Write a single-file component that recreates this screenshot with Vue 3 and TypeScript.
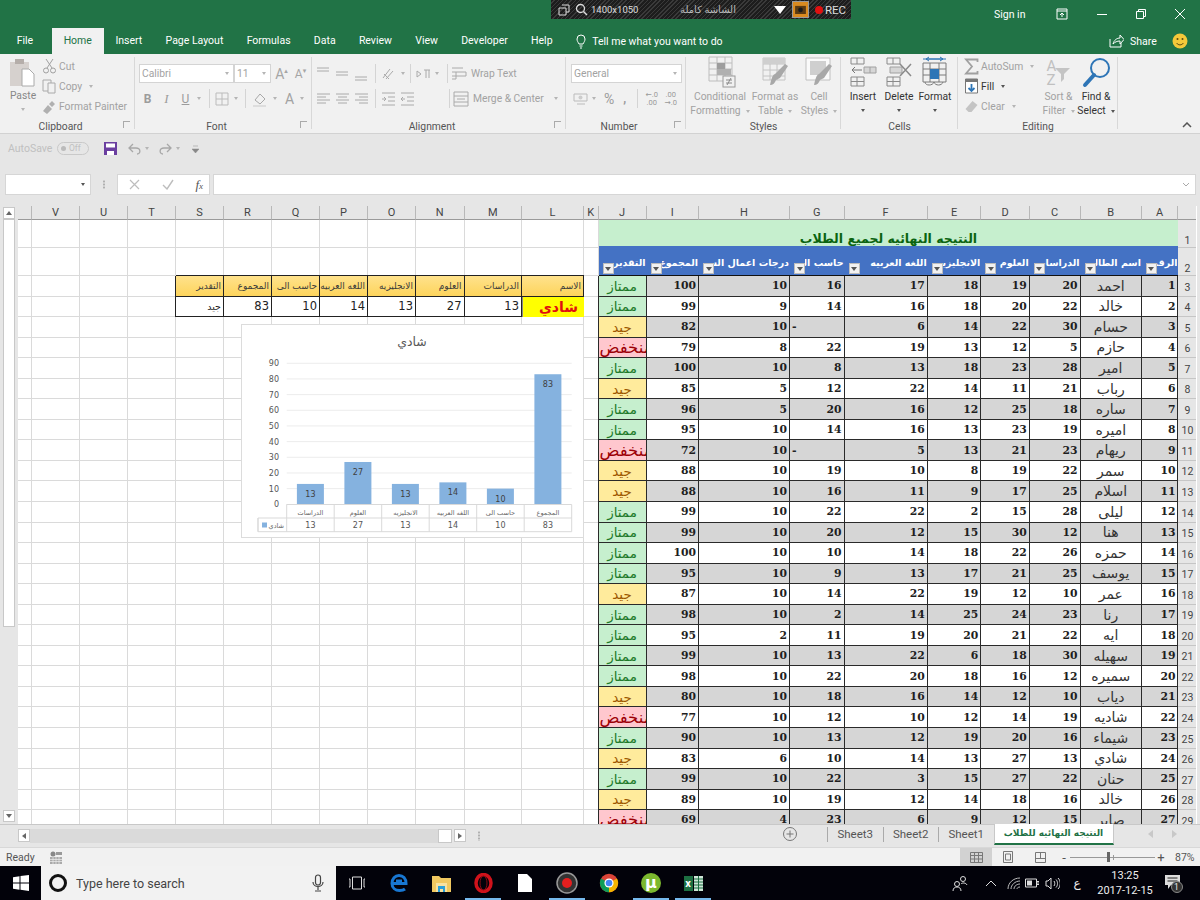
<script setup lang="ts">
type Cell = { text: string; cls: string }

const tabs = ['File', 'Home', 'Insert', 'Page Layout', 'Formulas', 'Data', 'Review', 'View', 'Developer', 'Help']
const leftCols = ['', 'V', 'U', 'T', 'S', 'R', 'Q', 'P', 'O', 'N', 'M', 'L', 'K']
const rightCols = ['J', 'I', 'H', 'G', 'F', 'E', 'D', 'C', 'B', 'A']
const columns = [...leftCols, ...rightCols]

const tableHead: Record<string, [string, string]> = {
  S: ['التقدير', 'جيد'],
  R: ['المجموع', '83'],
  Q: ['حاسب الى', '10'],
  P: ['اللغه العربيه', '14'],
  O: ['الانجليزيه', '13'],
  N: ['العلوم', '27'],
  M: ['الدراسات', '13'],
  L: ['الاسم', 'شادي'],
}

const headers = ['التقدير', 'المجموع', 'درجات اعمال السنه', 'حاسب الى', 'اللغه العربيه', 'الانجليزيه', 'العلوم', 'الدراسات', 'اسم الطالب', 'الرقم']

const students: string[][] = [
  ['احمد', '20', '19', '18', '17', '16', '10', '100', 'ممتاز'],
  ['خالد', '22', '20', '18', '16', '14', '9', '99', 'ممتاز'],
  ['حسام', '30', '22', '14', '6', '-', '10', '82', 'جيد'],
  ['حازم', '5', '12', '13', '19', '22', '8', '79', 'منخفض'],
  ['امير', '28', '23', '18', '13', '8', '10', '100', 'ممتاز'],
  ['رباب', '21', '11', '14', '22', '12', '5', '85', 'جيد'],
  ['ساره', '18', '25', '12', '16', '20', '5', '96', 'ممتاز'],
  ['اميره', '19', '23', '13', '16', '14', '10', '95', 'ممتاز'],
  ['ريهام', '23', '21', '13', '5', '-', '10', '72', 'منخفض'],
  ['سمر', '22', '19', '8', '10', '19', '10', '88', 'جيد'],
  ['اسلام', '25', '17', '9', '11', '16', '10', '88', 'جيد'],
  ['ليلى', '28', '15', '2', '22', '22', '10', '99', 'ممتاز'],
  ['هنا', '12', '30', '15', '12', '20', '10', '99', 'ممتاز'],
  ['حمزه', '26', '22', '18', '14', '10', '10', '100', 'ممتاز'],
  ['يوسف', '25', '21', '17', '13', '9', '10', '95', 'ممتاز'],
  ['عمر', '10', '12', '19', '22', '14', '10', '87', 'جيد'],
  ['رنا', '23', '24', '25', '14', '2', '10', '98', 'ممتاز'],
  ['ايه', '22', '21', '20', '19', '11', '2', '95', 'ممتاز'],
  ['سهيله', '30', '18', '6', '22', '13', '10', '99', 'ممتاز'],
  ['سميره', '12', '16', '18', '20', '22', '10', '98', 'ممتاز'],
  ['دياب', '10', '12', '14', '16', '18', '10', '80', 'جيد'],
  ['شاديه', '19', '14', '12', '10', '12', '10', '77', 'منخفض'],
  ['شيماء', '16', '20', '19', '12', '13', '10', '90', 'ممتاز'],
  ['شادي', '13', '27', '13', '14', '10', '6', '83', 'جيد'],
  ['حنان', '22', '27', '15', '3', '22', '10', '99', 'ممتاز'],
  ['خالد', '16', '18', '14', '12', '19', '10', '89', 'جيد'],
  ['صابر', '15', '12', '9', '6', '23', '4', '69', 'منخفض'],
]

const gradeClass: Record<string, string> = { 'ممتاز': 'g-good', 'جيد': 'g-mid', 'منخفض': 'g-low' }

const rowNumbers = Array.from({ length: 29 }, (_, i) => i + 1)

const rowCells = (r: number): Cell[] => {
  const out: Cell[] = leftCols.map((c) => {
    const t = tableHead[c]
    if (t && r === 3) return { text: t[0], cls: c === 'S' ? 'lt-head lt-first' : 'lt-head' }
    if (t && r === 4) {
      if (c === 'L') return { text: t[1], cls: 'lt-name' }
      return { text: t[1], cls: c === 'S' ? 'lt-val lt-first lt-small' : 'lt-val' }
    }
    return { text: '', cls: '' }
  })
  if (r === 1) {
    out.push({ text: 'النتيجه النهائيه لجميع الطلاب', cls: 'title-cell' })
  } else if (r === 2) {
    headers.forEach((h, i) => out.push({ text: h, cls: i === 0 ? 'th first' : 'th' }))
  } else {
    const s = students[r - 3]
    const zebra = r % 2 === 1 ? ' zebra' : ''
    out.push({ text: s[8], cls: 'td grade first ' + gradeClass[s[8]] })
    out.push({ text: s[7], cls: 'td num' + zebra })
    out.push({ text: s[6], cls: 'td num' + zebra })
    out.push({ text: s[5], cls: (s[5] === '-' ? 'td dash' : 'td num') + zebra })
    out.push({ text: s[4], cls: 'td num' + zebra })
    out.push({ text: s[3], cls: 'td num' + zebra })
    out.push({ text: s[2], cls: 'td num' + zebra })
    out.push({ text: s[1], cls: 'td num' + zebra })
    out.push({ text: s[0], cls: 'td name' + zebra })
    out.push({ text: String(r - 2), cls: 'td num' + zebra })
  }
  return out
}

// chart, drawn in page coordinates through the svg viewBox
const chartData = [
  { label: 'الدراسات', v: 13 },
  { label: 'العلوم', v: 27 },
  { label: 'الانجليزيه', v: 13 },
  { label: 'اللغه العربيه', v: 14 },
  { label: 'حاسب الى', v: 10 },
  { label: 'المجموع', v: 83 },
]
const plotLeft = 286.7
const plotBase = 504.3
const step = 47.5
const ticks = [0, 10, 20, 30, 40, 50, 60, 70, 80, 90]
const yOf = (v: number) => plotBase - v * 1.567
const xOf = (i: number) => plotLeft + step * i
</script>

<template>
  <div class="app">
    <div class="recorder">
      <svg width="12" height="12" viewBox="0 0 12 12" class="rec-a"><path d="M4 1h7v7H8M1 4h7v7H1z" fill="none" stroke="#ddd"/></svg>
      <svg width="13" height="13" viewBox="0 0 13 13" class="rec-b"><circle cx="5.5" cy="5.5" r="4" fill="none" stroke="#ddd" stroke-width="1.3"/><path d="M8.5 8.5l3.5 3.5" stroke="#ddd" stroke-width="1.5"/></svg>
      <span class="rec-size">1400x1050</span>
      <span class="rec-mode">الشاشة كاملة</span>
      <svg width="12" height="8" viewBox="0 0 12 8" class="rec-tri"><path d="M0 0h12L6 8z" fill="#fff"/></svg>
      <div class="rec-cam"><svg width="11" height="9" viewBox="0 0 12 10"><rect y="1" width="12" height="9" fill="#5a3a12"/><circle cx="6" cy="5.500" r="2.600" fill="#1a1a1a"/></svg></div>
      <span class="rec-dot"></span>
      <span class="rec-text">REC</span>
    </div>

    <header class="titlebar">
      <span class="sign">Sign in</span>
      <svg class="win w1" width="12" height="12" viewBox="0 0 12 12"><path d="M1 1h10v10H1zM1 3h10M6 9V5M4 7l2-2 2 2" fill="none" stroke="#fff"/></svg>
      <svg class="win w2" width="10" height="10" viewBox="0 0 10 10"><path d="M0 5.500h10" stroke="#fff"/></svg>
      <svg class="win w3" width="10" height="10" viewBox="0 0 10 10"><path d="M.5 2.500h7v7h-7zM2.500 2.500v-2h7v7h-2" fill="none" stroke="#fff"/></svg>
      <svg class="win w4" width="12" height="12" viewBox="0 0 12 12"><path d="M1 1l10 10M11 1L1 11" stroke="#fff"/></svg>
    </header>

    <nav class="tabs">
      <span v-for="t in tabs" :key="t" class="tab" :class="{ active: t === 'Home' }">{{ t }}</span>
      <svg class="bulb" width="10" height="15" viewBox="0 0 10 15"><path d="M3 10C2 8 1 7 1 5a4 4 0 018 0c0 2-1 3-2 5zM3.500 12h3M4 14h2" fill="none" stroke="#fff"/></svg>
      <span class="tell">Tell me what you want to do</span>
      <svg class="share-ic" width="15" height="14" viewBox="0 0 15 14"><path d="M1 5v8h11V9M4 10c1-4 4-6 7-6V1l4 4.500L11 10V7C8 7 6 8 4 10z" fill="none" stroke="#fff"/></svg>
      <span class="share">Share</span>
      <svg class="smile" width="16" height="16" viewBox="0 0 16 16"><circle cx="8" cy="8" r="7.500" fill="#f5c83a"/><circle cx="5.500" cy="6" r="1" fill="#5a4a10"/><circle cx="10.500" cy="6" r="1" fill="#5a4a10"/><path d="M4.500 10c2 2.500 5 2.500 7 0" fill="none" stroke="#5a4a10"/></svg>
    </nav>

    <section class="ribbon">
      <!-- Clipboard -->
      <div class="rgroup g-clip">
        <div class="rbody clip-body">
          <div class="paste">
            <svg width="28" height="28" viewBox="0 0 28 28"><rect x="1" y="3" width="19" height="24" fill="#d6d1ce"/><rect x="6" y="0" width="9" height="5" fill="#b5aeaa"/><path d="M13 10h7l5 5v12H13z" fill="#fff" stroke="#aaa"/></svg>
            <span>Paste</span>
            <i class="caret"></i>
          </div>
          <div class="clip-list">
            <div class="mini"><svg width="15" height="16" viewBox="0 0 15 16"><circle cx="4" cy="12.500" r="2.500" fill="none" stroke="#a0a0a0"/><circle cx="11" cy="12.500" r="2.500" fill="none" stroke="#a0a0a0"/><path d="M5 10L11 1M10 10L4 1" stroke="#a0a0a0"/></svg>Cut</div>
            <div class="mini"><svg width="15" height="15" viewBox="0 0 15 15"><path d="M1 1h8v11H1z" fill="none" stroke="#aaa"/><path d="M6 4h7v10H6z" fill="#f1f1f1" stroke="#aaa"/></svg>Copy<i class="caret ml"></i></div>
            <div class="mini"><svg width="15" height="15" viewBox="0 0 15 15"><path d="M1 12l5-6 4 4-5 5zM7 5l3-3 3 3-3 3z" fill="#b0b0b0"/></svg>Format Painter</div>
          </div>
        </div>
        <div class="rlabel lnc">Clipboard</div>
        <i class="launch"></i>
      </div>

      <!-- Font -->
      <div class="rgroup g-font">
        <div class="rbody rows">
          <div class="irow">
            <div class="field f-name">Calibri<i class="caret"></i></div>
            <div class="field f-size">11<i class="caret"></i></div>
            <span class="grow">A<sup>▴</sup></span>
            <span class="shrink">A<sup>▾</sup></span>
          </div>
          <div class="irow font-tools">
            <b class="gl w18">B</b><i class="gl w18 serif">I</i><u class="gl w18">U</u><i class="caret c11"></i>
            <span class="sep s-a"></span>
            <svg class="s14" viewBox="0 0 14 14"><path d="M1 1h12v12H1zM7 1v12M1 7h12" fill="none" stroke="#bbb"/></svg><i class="caret c18"></i>
            <span class="sep s-b"></span>
            <svg class="s16" viewBox="0 0 16 16"><path d="M3 9l5-6 5 5-5 5z" fill="none" stroke="#a8a8a8"/><path d="M1 14h13v2H1z" fill="#ddd"/></svg><i class="caret c10"></i>
            <span class="big-a">A</span><i class="caret c7"></i>
          </div>
        </div>
        <div class="rlabel lnc">Font</div>
        <i class="launch"></i>
      </div>

      <!-- Alignment -->
      <div class="rgroup g-align">
        <div class="rbody rows">
          <div class="irow">
            <svg class="a19" viewBox="0 0 19 16"><path d="M2 2h12M2 5h12"/></svg>
            <svg class="a19" viewBox="0 0 19 16"><path d="M2 6h12M2 9h12"/></svg>
            <svg class="a19" viewBox="0 0 19 16"><path d="M2 11h12M2 14h12"/></svg>
            <span class="sep s-c"></span>
            <svg class="a19" viewBox="0 0 19 16"><path d="M3 12L10 3M6 13l7-8M4 8l5 5"/></svg><i class="caret c2"></i>
            <span class="sep s-d"></span>
            <svg class="a19" viewBox="0 0 19 16"><path d="M3 5v6l4-3zM10 4h6M12 4v8M15 4v8"/></svg><i class="caret c2"></i>
            <span class="sep s-e"></span>
            <svg class="a16" viewBox="0 0 16 16"><path d="M1 2h11M1 6h14v4H1M1 13h4v-7"/></svg>
            <span class="rtxt">Wrap Text</span>
          </div>
          <div class="irow">
            <svg class="a19" viewBox="0 0 19 16"><path d="M2 3h13M2 6h9M2 9h13M2 12h9"/></svg>
            <svg class="a19" viewBox="0 0 19 16"><path d="M2 3h13M4 6h9M2 9h13M4 12h9"/></svg>
            <svg class="a19" viewBox="0 0 19 16"><path d="M2 3h13M6 6h9M2 9h13M6 12h9"/></svg>
            <span class="sep s-c"></span>
            <svg class="a19" viewBox="0 0 19 16"><path d="M2 2h13M8 6h7M8 10h7M2 14h13M2 8h4M4 6l2 2-2 2"/></svg>
            <svg class="a19" viewBox="0 0 19 16"><path d="M2 2h13M8 6h7M8 10h7M2 14h13M2 8h4M4 6L2 8l2 2"/></svg>
            <span class="sep s-f"></span>
            <svg class="a16" viewBox="0 0 16 16"><path d="M1 1h14v14H1zM1 5h14M1 11h14M4 8h8"/></svg>
            <span class="rtxt">Merge &amp; Center</span><i class="caret c8"></i>
          </div>
        </div>
        <div class="rlabel lnc">Alignment</div>
        <i class="launch"></i>
      </div>

      <!-- Number -->
      <div class="rgroup g-num">
        <div class="rbody rows">
          <div class="irow">
            <div class="field f-gen">General<i class="caret"></i></div>
          </div>
          <div class="irow num-tools">
            <svg class="s16" viewBox="0 0 16 16"><path d="M1 3h13v7H1zM4 13h8" fill="none" stroke="#bbb"/><circle cx="7.500" cy="6.500" r="2" fill="#ccc"/></svg><i class="caret c3"></i>
            <span class="pct">%</span><span class="cmm">,</span>
            <span class="sep s-g"></span>
            <span class="dec">←.0<br>.00</span><span class="dec">.00<br>→.0</span>
          </div>
        </div>
        <div class="rlabel lnc">Number</div>
        <i class="launch"></i>
      </div>

      <!-- Styles -->
      <div class="rgroup g-styles">
        <div class="rbody big-row">
          <div class="bigbtn b-cond">
            <svg width="34" height="32" viewBox="0 0 34 32"><path d="M6 1h23v24H6zM6 7h23M6 13h23M6 19h23M14 1v24M22 1v24" fill="none" stroke="#bdbdbd"/><path d="M14 7h8v6h-8z" fill="#9d9d9d"/><path d="M14 13h14v6H14z" fill="#b0b0b0"/><rect x="20" y="20" width="12" height="11" fill="#f1f1f1" stroke="#9a9a9a"/><path d="M23 24h6M23 27h6M28 22l-4 7" stroke="#8a8a8a"/></svg>
            <span>Conditional</span><span>Formatting<i class="caret ml"></i></span>
          </div>
          <div class="bigbtn b-table">
            <svg width="34" height="32" viewBox="0 0 34 32"><path d="M5 2h22v22H5zM5 8h22M5 14h22M5 20h22M12 2v22M19 2v22" fill="none" stroke="#c4c4c4"/><path d="M5 2h22v6H5z" fill="#cfcfcf"/><path d="M12 29c3 0 5-2 6-5l4-2 8-12-3-2-10 10c-3 1-4 7-5 11z" fill="#a8a8a8"/></svg>
            <span>Format as</span><span>Table<i class="caret ml"></i></span>
          </div>
          <div class="bigbtn b-cell">
            <svg width="34" height="32" viewBox="0 0 34 32"><path d="M4 2h24v22H4z" fill="#fafafa" stroke="#c0c0c0"/><path d="M8 5h16v14H8z" fill="#cfcfcf"/><path d="M12 29c3 0 5-2 6-5l4-2 8-12-3-2-10 10c-3 1-4 7-5 11z" fill="#a8a8a8"/></svg>
            <span>Cell</span><span>Styles<i class="caret ml"></i></span>
          </div>
        </div>
        <div class="rlabel">Styles</div>
      </div>

      <!-- Cells -->
      <div class="rgroup g-cells">
        <div class="rbody big-row">
          <div class="bigbtn dark b-ins">
            <svg width="30" height="32" viewBox="0 0 30 32"><path d="M3 2h13v6H3zM9 2v6M3 21h13v9H3zM3 25.500h13M9 21v9" fill="none" stroke="#8a8a8a"/><path d="M14 14H4M7 11l-3 3 3 3" fill="none" stroke="#777"/><path d="M16 11h12v6H16zM22 11v6" fill="#d6d6d6" stroke="#a0a0a0"/></svg>
            <span>Insert</span><i class="caret dk"></i>
          </div>
          <div class="bigbtn dark b-del">
            <svg width="30" height="32" viewBox="0 0 30 32"><path d="M3 2h13v6H3zM9 2v6M3 21h13v9H3zM3 25.500h13M9 21v9" fill="none" stroke="#8a8a8a"/><path d="M6 11h12v6H6z" fill="#d6d6d6" stroke="#a0a0a0"/><path d="M16 8l11 12M27 8L16 20" stroke="#8a8a8a" stroke-width="1.500"/></svg>
            <span>Delete</span><i class="caret dk"></i>
          </div>
          <div class="bigbtn dark b-fmt">
            <svg width="26" height="32" viewBox="0 0 26 32"><path d="M1 3h23M4 3h17M7 1L4 3l3 2M18 1l3 2-3 2" fill="none" stroke="#2e75b6"/><path d="M1 7h23v19H1zM1 13h23M1 19h23M8 7v19M17 7v19" fill="none" stroke="#7a7a7a"/><path d="M8 13h9v10H8z" fill="#2e75b6"/><path d="M3 26c0 4 8 4 9 0M12 26c1 4 8 4 9 0" fill="none" stroke="#7a7a7a"/></svg>
            <span>Format</span><i class="caret dk"></i>
          </div>
        </div>
        <div class="rlabel">Cells</div>
      </div>

      <!-- Editing -->
      <div class="rgroup g-edit">
        <div class="rbody edit-body">
          <div class="clip-list">
            <div class="mini"><svg width="14" height="17" viewBox="0 0 14 17"><path d="M13 4V1.500H1.500L7.500 8.500 1.500 15.500H13V13" fill="none" stroke="#a0a0a0" stroke-width="1.800"/></svg>AutoSum<i class="caret ml2"></i></div>
            <div class="mini dark-t"><svg width="14" height="16" viewBox="0 0 14 16"><path d="M1 1h12v14H1z" fill="#fff" stroke="#777"/><path d="M1 1h12v3H1z" fill="#777"/><path d="M7 6v7M4 10l3 3 3-3" fill="none" stroke="#2e75b6" stroke-width="1.800"/></svg>Fill<i class="caret ml dk"></i></div>
            <div class="mini"><svg width="14" height="14" viewBox="0 0 14 14"><path d="M1 10l7-8 5 4-6 7H4z" fill="#c4c4c4"/></svg>Clear<i class="caret ml"></i></div>
          </div>
          <div class="bigbtn b-sort">
            <div class="sort-ic"><span>A<br>Z</span><svg width="15" height="14" viewBox="0 0 15 14"><path d="M0 0h15L9 6v5l-3 3V6z" fill="#c4c4c4"/></svg></div>
            <span>Sort &amp;</span><span>Filter<i class="caret ml"></i></span>
          </div>
          <div class="bigbtn dark b-find">
            <svg width="30" height="32" viewBox="0 0 30 32"><circle cx="19" cy="12" r="9" fill="none" stroke="#2e75b6" stroke-width="2"/><path d="M13 19L4 29" stroke="#2e75b6" stroke-width="4" stroke-linecap="round"/></svg>
            <span>Find &amp;</span><span>Select<i class="caret ml dk"></i></span>
          </div>
        </div>
        <div class="rlabel">Editing</div>
      </div>
      <svg class="collapse" width="10" height="6" viewBox="0 0 10 6"><path d="M1 5l4-4 4 4" fill="none" stroke="#555" stroke-width="1.500"/></svg>
    </section>

    <div class="qat">
      <span class="autosave">AutoSave</span>
      <div class="toggle"><i></i>Off</div>
      <svg class="q-save" width="13" height="13" viewBox="0 0 13 13"><path d="M0 0h13v13H0z" fill="#6b3fa0"/><path d="M2 1.500h9v4H2z" fill="#fff"/><path d="M3 9h7v4H3z" fill="#fff"/></svg>
      <svg class="q-undo" width="13" height="12" viewBox="0 0 13 12"><path d="M5 1L1 5l4 4M1 5h7c5 0 5 6 1 6" fill="none" stroke="#a8a8a8" stroke-width="1.300"/></svg><i class="caret"></i>
      <svg class="q-redo" width="13" height="12" viewBox="0 0 13 12"><path d="M8 1l4 4-4 4M12 5H5c-5 0-5 6-1 6" fill="none" stroke="#a8a8a8" stroke-width="1.300"/></svg><i class="caret"></i>
      <svg class="q-more" width="7" height="8" viewBox="0 0 7 8"><path d="M1 1h5M0 4h7l-3.500 4z" fill="#888" stroke="#888" stroke-width=".5"/></svg>
    </div>

    <div class="formula">
      <div class="namebox"><i class="caret dk"></i></div>
      <div class="dots"></div>
      <div class="fxbox">
        <svg width="11" height="11" viewBox="0 0 11 11"><path d="M1 1l9 9M10 1l-9 9" stroke="#bdbdbd" stroke-width="1.200"/></svg>
        <svg width="12" height="11" viewBox="0 0 12 11"><path d="M1 6l4 4 6-9" fill="none" stroke="#bdbdbd" stroke-width="1.400"/></svg>
        <em>f<small>x</small></em>
      </div>
      <div class="fxinput"><svg width="8" height="5" viewBox="0 0 8 5"><path d="M1 1l3 3 3-3" fill="none" stroke="#aaa"/></svg></div>
    </div>

    <main class="sheet">
      <div class="vscroll">
        <button class="sbtn"><i class="up"></i></button>
        <div class="vtrack"><div class="vthumb"></div></div>
        <button class="sbtn"><i class="down"></i></button>
      </div>
      <div class="gridwrap">
        <div class="grid">
          <div v-for="c in columns" :key="'h' + c" class="colhead">{{ c }}</div>
          <div class="colhead last"></div>
          <template v-for="r in rowNumbers" :key="r">
            <div v-for="(cell, i) in rowCells(r)" :key="r + '-' + i" class="cell" :class="cell.cls">
              <template v-if="cell.cls.startsWith('th')">
                <span class="filter"><i></i></span>
                <span class="th-text">{{ cell.text }}</span>
              </template>
              <span v-else>{{ cell.text }}</span>
            </div>
            <div class="rowhead" :class="{ tall: r < 3 }">{{ r }}</div>
          </template>
        </div>

        <div class="chart">
          <svg width="341" height="212" viewBox="242 325 341 212">
            <text x="412" y="346" class="c-title">شادي</text>
            <g v-for="t in ticks" :key="t">
              <path v-if="t" :d="`M${plotLeft} ${yOf(t)}h285`" stroke="#ececec"/>
              <text x="279" :y="yOf(t) + 3" class="c-axis">{{ t }}</text>
            </g>
            <g v-for="(d, i) in chartData" :key="d.label">
              <rect :x="xOf(i) + 10.2" :y="yOf(d.v)" width="27" :height="d.v * 1.567" fill="#85b2df"/>
              <text :x="xOf(i) + 23.7" :y="yOf(d.v) + 13" class="c-val">{{ d.v }}</text>
              <text :x="xOf(i) + 23.7" y="514.500" class="c-cat">{{ d.label }}</text>
              <text :x="xOf(i) + 23.7" y="528" class="c-val light">{{ d.v }}</text>
              <path :d="`M${xOf(i)} 504.300v27.500`" stroke="#d9d9d9"/>
            </g>
            <path d="M286.700 504.500H571.700V531.700H258V518H571.700M258 518v13.700" fill="none" stroke="#d9d9d9"/>
            <rect x="262" y="522.500" width="5" height="5" fill="#85b2df"/>
            <text x="284" y="528" class="c-cat end">شادي</text>
          </svg>
        </div>
      </div>
    </main>

    <div class="tabbar">
      <button class="hbtn"><i class="lf"></i></button>
      <div class="htrack"></div>
      <div class="hthumb"></div>
      <button class="hbtn r"><i class="rt"></i></button>
      <div class="dots tb"></div>
      <svg class="plus" width="16" height="16" viewBox="0 0 16 16"><circle cx="8" cy="8" r="6.500" fill="none" stroke="#777"/><path d="M4.500 8h7M8 4.500v7" stroke="#777"/></svg>
      <span class="stab first">Sheet3</span>
      <span class="stab">Sheet2</span>
      <span class="stab">Sheet1</span>
      <span class="stab-active">النتيجه النهائيه للطلاب</span>
      <svg class="nav nav1" width="5" height="8" viewBox="0 0 5 8"><path d="M5 0v8L0 4z" fill="#c8c8c8"/></svg>
      <svg class="nav nav2" width="5" height="8" viewBox="0 0 5 8"><path d="M0 0v8l5-4z" fill="#c8c8c8"/></svg>
    </div>

    <div class="status">
      <span class="ready">Ready</span>
      <svg class="macro" width="12" height="13" viewBox="0 0 12 13"><circle cx="3" cy="3" r="2.500" fill="#888"/><path d="M6 1h6v3H6z" fill="#999"/><path d="M0 6h12v7H0z" fill="#aaa"/><path d="M0 8.500h12M0 10.500h12M3 6v7M6 6v7M9 6v7" stroke="#eee" stroke-width=".7"/></svg>
      <div class="view v-on"><svg width="13" height="11" viewBox="0 0 13 11"><path d="M.5.500h12v10H.5zM.5 3.500h12M.5 7h12M4.500.500v10M8.500.500v10" fill="none" stroke="#777"/></svg></div>
      <div class="view"><svg width="10" height="12" viewBox="0 0 10 12"><path d="M.5.500h9v11h-9zM2.500 3h5v6h-5z" fill="none" stroke="#777"/></svg></div>
      <div class="view"><svg width="11" height="11" viewBox="0 0 11 11"><path d="M.5.500h10v10H.5zM.5 6.500h10M5.500.500v6" fill="none" stroke="#777"/></svg></div>
      <span class="zm minus">-</span>
      <div class="slider"><i class="tick"></i><i class="knob"></i></div>
      <span class="zm">+</span>
      <span class="pctz">87%</span>
    </div>

    <footer class="taskbar">
      <div class="start"><svg width="16" height="16" viewBox="0 0 16 16"><path d="M0 2.300l6.500-1v6.200H0zM7.500 1.100L16 0v7.500H7.500zM0 8.500h6.500v6.200l-6.500-1zM7.500 8.500H16V16l-8.500-1.200z" fill="#fff"/></svg></div>
      <div class="search">
        <span class="cortana"></span>
        <span class="stext">Type here to search</span>
        <svg width="12" height="18" viewBox="0 0 12 18"><rect x="3.500" y="1" width="5" height="10" rx="2.500" fill="none" stroke="#444" stroke-width="1.200"/><path d="M1 8c0 6 10 6 10 0M6 13v3M3 17h6" fill="none" stroke="#444" stroke-width="1.200"/></svg>
      </div>
      <div class="ti"><svg width="18" height="14" viewBox="0 0 18 14"><path d="M4.500 1h9v12h-9zM1 3h1v8H1M17 3h-1v8h1" fill="none" stroke="#ddd"/></svg></div>
      <div class="ti"><svg width="18" height="18" viewBox="0 0 18 18"><path d="M2.500 9.500h13.500C16 4.500 13 1.500 9 1.500 5 1.500 2 5 2 9.500c0 4.500 3.500 7 7.500 7 2.500 0 4.500-.7 5.500-1.500M6 7h6" fill="none" stroke="#1877d2" stroke-width="3"/></svg></div>
      <div class="ti"><svg width="19" height="17" viewBox="0 0 19 17"><path d="M0 1h7l2 2h10v14H0z" fill="#f0c860"/><path d="M4 8h11v9H4z" fill="#f7e2a0"/><path d="M6 11h7v6h-2v-3H8v3H6z" fill="#2a9fd8"/></svg></div>
      <div class="ti on"><svg width="19" height="20" viewBox="0 0 19 20"><ellipse cx="9.500" cy="10" rx="7.500" ry="8.500" fill="none" stroke="#d0121b" stroke-width="3.500"/><ellipse cx="9.500" cy="10" rx="3.500" ry="7" fill="none" stroke="#8a0a10" stroke-width="1"/></svg></div>
      <div class="ti"><svg width="14" height="18" viewBox="0 0 14 18"><path d="M0 0h9l5 5v13H0z" fill="#fff"/></svg></div>
      <div class="ti on"><svg width="22" height="22" viewBox="0 0 22 22"><circle cx="11" cy="11" r="10" fill="#333" stroke="#999" stroke-width="1.500"/><circle cx="11" cy="11" r="5" fill="#e51f1f"/></svg></div>
      <div class="ti"><svg width="20" height="20" viewBox="0 0 24 24"><circle cx="12" cy="12" r="11" fill="#db4437"/><path d="M12 12L2.500 6.500A11 11 0 0012 23z" fill="#0f9d58"/><path d="M12 12v11A11 11 0 0021.500 6.500z" fill="#f4b400"/><circle cx="12" cy="12" r="5.500" fill="#fff"/><circle cx="12" cy="12" r="4" fill="#4285f4"/></svg></div>
      <div class="ti on"><span class="utorrent">µ</span></div>
      <div class="ti on excel"><span class="xl-x">x</span><svg width="9" height="15" viewBox="0 0 9 15"><path d="M0 0h9v15H0z" fill="#cfe6d8"/><path d="M0 3h9M0 6h9M0 9h9M0 12h9M4.500 0v15" stroke="#1d6f42"/></svg></div>
      <div class="tray">
        <svg width="16" height="16" viewBox="0 0 16 16"><circle cx="5" cy="9" r="2.500" fill="none" stroke="#ddd"/><circle cx="11" cy="4" r="2.500" fill="none" stroke="#ddd"/><path d="M1 16c0-3 2-4 4-4s4 1 4 4M9 9c1-1.500 5-1.500 6 1" fill="none" stroke="#ddd"/></svg>
        <svg width="12" height="7" viewBox="0 0 12 7"><path d="M1 6l5-5 5 5" fill="none" stroke="#ddd"/></svg>
        <svg width="14" height="13" viewBox="0 0 14 13"><path d="M1 12C1 6 6 1 13 1M4 12c0-4 4-8 9-8M7 12c0-3 3-5 6-5M10 12c0-1 1-2 3-2" fill="none" stroke="#bbb"/></svg>
        <svg width="14" height="10" viewBox="0 0 14 10"><path d="M.5 1h11v8H.5zM12 3.500h2v3h-2z" fill="none" stroke="#ddd"/><path d="M2 2.500h5v5H2z" fill="#ddd"/></svg>
        <svg width="15" height="13" viewBox="0 0 15 13"><path d="M1 4h2l3-3v11L3 9H1zM9 4c1 1.500 1 3.500 0 5M11 2.500c2 2 2 6 0 8M13 1c3 3 3 8 0 11" fill="none" stroke="#ddd"/></svg>
        <span class="ime">ع</span>
        <div class="clock"><span>13:25</span><span>2017-12-15</span></div>
        <div class="notif"><svg width="15" height="14" viewBox="0 0 15 14"><path d="M0 0h15v10H6l-3 4v-4H0z" fill="#ddd"/><path d="M2.500 3h10M2.500 6h10" stroke="#222"/></svg><span>1</span></div>
      </div>
    </footer>
  </div>
</template>

<style>
html, body { margin: 0; background: #fff; }
</style>

<style scoped>
.app {
  width: 1200px;
  height: 900px;
  position: relative;
  overflow: hidden;
  display: flex;
  flex-direction: column;
  font-family: Roboto, "DejaVu Sans", sans-serif;
  font-size: 11px;
  color: #444;
  background: #e6e6e6;
}

.caret {
  display: inline-block;
  width: 0;
  height: 0;
  border: 2.5px solid transparent;
  border-top: 3px solid #b5b5b5;
  border-bottom: 0;
  font-style: normal;
  flex: none;
}
.caret.dk { border-top-color: #555; }
.caret.ml { margin-left: 5px; vertical-align: middle; }
.caret.ml2 { margin-left: 5px; vertical-align: middle; }

/* screen recorder strip */
.recorder {
  position: absolute;
  left: 551px;
  top: 0;
  width: 300px;
  height: 19px;
  display: flex;
  align-items: center;
  color: #ddd;
  z-index: 5;
  background: repeating-linear-gradient(135deg, #1d1d1d 0 2px, #3a3a3a 2px 3px);
}
.rec-a { margin-left: 7px; }
.rec-b { margin-left: 5px; }
.rec-size { margin-left: 3px; width: 62px; font-size: 9.5px; }
.rec-mode { margin-left: 27px; width: 56px; font-size: 10px; color: #bbb; text-align: center; white-space: nowrap; }
.rec-tri { margin-left: 38px; }
.rec-cam { margin-left: 6px; width: 17px; height: 17px; border: 1px solid #999; background: #d98a20; box-sizing: border-box; display: flex; align-items: center; justify-content: center; }
.rec-dot { margin-left: 6px; width: 8px; height: 8px; border-radius: 50%; background: #e01010; }
.rec-text { margin-left: 2px; font-size: 11.5px; }

/* title bar */
.titlebar {
  height: 28px;
  flex: none;
  background: #217346;
  display: flex;
  align-items: center;
  color: #fff;
  position: relative;
}
.sign { margin-left: 994px; font-size: 10.5px; width: 62px; }
.win { flex: none; }
.w2 { margin-left: 29px; }
.w3 { margin-left: 29px; }
.w4 { margin-left: 28px; }

.tabs {
  height: 26px;
  flex: none;
  background: #217346;
  display: flex;
  align-items: center;
  color: #fff;
  padding-left: 5px;
  padding-right: 12px;
  box-sizing: border-box;
  font-size: 10.5px;
}
.tab {
  height: 26px;
  line-height: 26px;
  padding: 0 11.65px;
  white-space: nowrap;
}
.tab.active {
  background: #f1f1f1;
  color: #217346;
  width: 52px;
  margin-left: 7px;
  padding: 0;
  text-align: center;
}
.bulb { margin-left: 12px; }
.tell { margin-left: 6px; font-size: 10.5px; }
.share-ic { margin-left: auto; }
.share { margin-left: 6px; width: 42px; font-size: 10.5px; }

/* ribbon */
.ribbon {
  height: 80px;
  flex: none;
  background: #f1f1f1;
  border-bottom: 1px solid #d2d2d2;
  box-sizing: border-box;
  display: flex;
  position: relative;
  color: #a2a2a2;
  padding-top: 2px;
  font-size: 10.3px;
  white-space: nowrap;
}
.rgroup {
  position: relative;
  display: flex;
  flex-direction: column;
  flex: none;
  height: 77px;
}
.rgroup::after {
  content: "";
  position: absolute;
  right: 0;
  top: 1px;
  bottom: 4px;
  width: 1px;
  background: #d8d8d8;
}
.g-clip { width: 135px; }
.g-font { width: 177px; }
.g-align { width: 254px; }
.g-num { width: 120px; }
.g-styles { width: 155px; }
.g-cells { width: 117px; }
.g-edit { width: 160px; }
.rbody { height: 63px; flex: none; }
.rlabel {
  height: 14px;
  line-height: 14px;
  margin-top: 1px;
  text-align: center;
  color: #555;
  font-size: 10.3px;
}
.rlabel.lnc { padding-right: 14px; }
.launch {
  position: absolute;
  right: 5px;
  bottom: 5px;
  width: 6px;
  height: 6px;
  border-left: 1px solid #aaa;
  border-top: 1px solid #aaa;
}

.clip-body { display: flex; padding-left: 7px; }
.paste {
  width: 32px;
  display: flex;
  flex-direction: column;
  align-items: center;
  padding-top: 3px;
  color: #888;
}
.paste span { margin-top: 2px; line-height: 14px; }
.paste .caret { margin-top: 5px; }
.clip-list { margin-left: 3px; }
.mini {
  height: 20px;
  display: flex;
  align-items: center;
  gap: 2px;
}
.mini svg { width: 15px; flex: none; }
.dark-t { color: #333; }

.rows { padding-top: 8px; display: flex; flex-direction: column; gap: 6px; box-sizing: border-box; }
.irow { height: 19px; display: flex; align-items: center; flex: none; }
.field {
  height: 19px;
  box-sizing: border-box;
  background: #fff;
  border: 1px solid #d4d4d4;
  display: flex;
  align-items: center;
  justify-content: space-between;
  padding: 0 4px 0 2px;
}
.f-name { width: 95px; margin-left: 4px; }
.f-size { width: 37px; }
.f-gen { width: 111px; margin-left: 5px; }
.grow, .shrink { font-size: 14px; color: #a5a5a5; width: 19px; text-align: center; }
.grow { margin-left: 1px; }
.shrink { font-size: 12px; }
.grow sup, .shrink sup { font-size: 7px; line-height: 0; }
.gl { text-align: center; font-size: 12px; color: #9c9c9c; flex: none; }
.w18 { width: 19px; }
.serif { font-family: "Liberation Serif", serif; font-size: 13px; }
.font-tools { padding-left: 3px; }
.c11 { margin-left: 2px; }
.sep { width: 1px; height: 19px; background: #d4d4d4; flex: none; }
.s-a { margin: 0 4px 0 8px; }
.s14 { width: 14px; height: 14px; margin-left: 1px; }
.c18 { margin-left: 5px; }
.s-b { margin: 0 6px 0 7px; }
.s16 { width: 16px; height: 16px; flex: none; }
.c10 { margin-left: 5px; }
.big-a { font-size: 14px; margin-left: 8px; color: #a2a2a2; }
.c7 { margin-left: 6px; }

.g-align .irow { padding-left: 3px; }
.a19 { width: 19px; height: 16px; flex: none; fill: none; stroke: #aaa; }
.a16 { width: 16px; height: 16px; flex: none; fill: none; stroke: #aaa; }
.s-c { margin: 0 4px 0 3px; }
.c2 { margin-left: 2px; }
.s-d { margin: 0 3px 0 5px; }
.s-e { margin: 0 3px 0 8px; }
.s-f { margin: 0 3px 0 31px; }
.rtxt { margin-left: 4px; }
.c8 { margin-left: 10px; }

.num-tools { padding-left: 7px; }
.c3 { margin-left: 3px; }
.pct { margin-left: 8px; font-size: 14px; color: #9c9c9c; }
.cmm { margin-left: 9px; font-size: 12px; font-weight: bold; color: #9c9c9c; line-height: 10px; }
.s-g { margin: 0 4px 0 11px; }
.dec { font-size: 7.5px; line-height: 8px; width: 19px; text-align: center; color: #999; }

.big-row { display: flex; }
.bigbtn {
  display: flex;
  flex-direction: column;
  align-items: center;
  flex: none;
  line-height: 14px;
  color: #a2a2a2;
}
.bigbtn svg { margin-bottom: 2px; flex: none; }
.bigbtn.dark { color: #333; }
.bigbtn.dark > .caret { margin-top: 5px; }
.b-cond { width: 68px; }
.b-table { width: 50px; margin-left: -4px; }
.b-cell { width: 38px; }
.b-ins { width: 36px; margin-left: 4px; }
.b-del { width: 36px; }
.b-fmt { width: 36px; }
.edit-body { display: flex; padding-left: 4px; }
.edit-body .clip-list { margin-left: 2px; width: 76px; }
.b-sort { width: 37px; }
.b-find { width: 36px; margin-left: 1px; }
.sort-ic { height: 34px; display: flex; align-items: flex-start; padding-top: 3px; box-sizing: border-box; }
.sort-ic span { font-size: 15px; line-height: 14px; color: #c0c0c0; }
.sort-ic svg { margin-top: 9px; margin-left: -1px; }
.collapse { position: absolute; right: 8px; bottom: 5px; }

/* quick access */
.qat {
  height: 29px;
  flex: none;
  display: flex;
  align-items: center;
  color: #c0c0c0;
  padding-left: 8px;
  box-sizing: border-box;
}
.autosave { width: 49px; font-size: 10.5px; }
.toggle {
  width: 32px;
  height: 13px;
  box-sizing: border-box;
  border: 1px solid #c9c9c9;
  border-radius: 7px;
  font-size: 8.5px;
  line-height: 11px;
  display: flex;
  align-items: center;
  gap: 3px;
  padding-left: 3px;
}
.toggle i { width: 5px; height: 5px; border-radius: 50%; background: #bbb; }
.q-save { margin-left: 15px; }
.q-undo { margin-left: 11px; }
.q-redo { margin-left: 10px; }
.qat .caret { margin-left: 4px; }
.q-more { margin-left: 12px; }

/* formula bar */
.formula {
  height: 43px;
  flex: none;
  display: flex;
  padding: 11px 4px 11px 5px;
  box-sizing: border-box;
  align-items: stretch;
}
.namebox {
  width: 86px;
  background: #fff;
  border: 1px solid #d6d6d6;
  box-sizing: border-box;
  display: flex;
  align-items: center;
  justify-content: flex-end;
  padding-right: 5px;
}
.dots {
  width: 2px;
  height: 9px;
  margin: 6px 12px 0 12px;
  background: radial-gradient(circle, #b0b0b0 1px, transparent 1.2px) 0 0 / 2px 3px;
}
.fxbox {
  width: 93px;
  background: #fff;
  border: 1px solid #d6d6d6;
  box-sizing: border-box;
  display: flex;
  align-items: center;
  padding: 0 6px 0 11px;
  justify-content: space-between;
  margin-right: 3px;
}
.fxbox em { font-family: "Liberation Serif", serif; font-size: 13px; color: #555; }
.fxbox small { font-size: 9px; }
.fxinput {
  flex: 1;
  background: #fff;
  border: 1px solid #d6d6d6;
  box-sizing: border-box;
  display: flex;
  align-items: center;
  justify-content: flex-end;
  padding-right: 5px;
}

/* sheet */
.sheet {
  height: 618px;
  flex: none;
  display: flex;
  background: #e6e6e6;
}
.vscroll {
  width: 18px;
  flex: none;
  display: flex;
  flex-direction: column;
  align-items: center;
  padding: 1px 3px 2px 3px;
  box-sizing: border-box;
}
.sbtn {
  width: 12px;
  height: 12px;
  padding: 0;
  background: #fff;
  border: 1px solid #c8c8c8;
  box-sizing: border-box;
  display: flex;
  align-items: center;
  justify-content: center;
  flex: none;
}
.sbtn i, .hbtn i { display: block; width: 0; height: 0; border: 3px solid transparent; }
.sbtn .up { border-bottom: 4px solid #666; border-top: 0; }
.sbtn .down { border-top: 4px solid #666; border-bottom: 0; }
.vtrack { flex: 1; width: 12px; background: #e6e6e6; }
.vthumb { height: 408px; background: #fff; border: 1px solid #c8c8c8; box-sizing: border-box; }
.gridwrap {
  width: 1179px;
  flex: none;
  height: 618px;
  overflow: hidden;
  position: relative;
  background: #fff;
}
.grid {
  display: grid;
  grid-template-columns: 14px 48px 48px 48px 48px 48px 48px 48px 48px 48.5px 57.5px 62px 14.5px 48px 52.5px 91px 54.5px 83.2px 53.7px 48.3px 50.9px 61.4px 36.5px 18px;
  grid-template-rows: 14px 28px 28px repeat(27, 20.56px);
  direction: ltr;
}
.colhead {
  background: #e6e6e6;
  border-right: 1px solid #b8b8b8;
  border-bottom: 1px solid #9a9a9a;
  box-sizing: border-box;
  text-align: center;
  font-size: 11px;
  line-height: 13px;
  color: #444;
}
.colhead.last { border-right: 0; background: #e6e6e6; }
.rowhead {
  background: #e6e6e6;
  border-bottom: 1px solid #c6c6c6;
  box-sizing: border-box;
  font-size: 10.5px;
  color: #444;
  display: flex;
  align-items: flex-end;
  justify-content: center;
  padding-bottom: 2px;
  overflow: hidden;
}
.rowhead.tall { padding-bottom: 0; }
.cell {
  box-sizing: border-box;
  border-right: 1px solid #dadada;
  border-bottom: 1px solid #dadada;
  overflow: hidden;
  display: flex;
  align-items: center;
  white-space: nowrap;
  min-width: 0;
  font-family: "DejaVu Sans", sans-serif;
  color: #222;
}

/* small table on the left */
.lt-head, .lt-val, .lt-name {
  justify-content: flex-end;
  padding-right: 2px;
  font-size: 9px;
  border-right: 1px solid #222;
  border-bottom: 1px solid #222;
}
.lt-head {
  background: linear-gradient(#ffe28c, #fdd45c);
  box-shadow: 0 -1px 0 #222;
  color: #3a3a3a;
}
.lt-val { font-size: 11.5px; background: #fff; }
.lt-small { font-size: 9.5px; }
.lt-first { box-shadow: -1px 0 0 #222, 0 -1px 0 #222; }
.lt-first.lt-val { box-shadow: -1px 0 0 #222; }
.lt-name {
  background: #ffff00;
  color: #e01010;
  font-size: 14px;
  font-weight: bold;
  border: 0;
  border-left: 1px solid #888;
  padding-right: 6px;
}

/* main table */
.title-cell {
  grid-column: span 10;
  background: #c6efce;
  color: #0a6410;
  font-size: 12.5px;
  font-weight: bold;
  justify-content: center;
  align-items: flex-end;
  padding-bottom: 0;
  border: 0;
  border-bottom: 2px solid #4472c4;
}
.th {
  background: #4472c4;
  color: #fff;
  border: 0;
  border-bottom: 1px solid #111;
  font-size: 9.5px;
  font-weight: bold;
  align-items: flex-end;
  padding: 0 1px 0 4px;
  position: relative;
}
.th-text {
  flex: 1;
  min-width: 0;
  overflow: hidden;
  direction: rtl;
  text-align: right;
  align-self: flex-start;
  margin-top: 7px;
  line-height: 16px;
}
.filter {
  width: 11px;
  height: 11px;
  flex: none;
  background: #f1f1f1;
  border: 1px solid #bcbcbc;
  box-sizing: border-box;
  display: flex;
  align-items: center;
  justify-content: center;
  margin-bottom: 1px;
}
.filter i { width: 0; height: 0; border: 3px solid transparent; border-top: 4px solid #555; border-bottom: 0; }
.td {
  border-right: 1px solid #2a2a2a;
  border-bottom: 1.5px solid #2a2a2a;
  background: #fff;
}
.td.first { box-shadow: -1px 0 0 #2a2a2a; }
.zebra { background: #d6d6d6; }
.num {
  justify-content: flex-end;
  padding-right: 2px;
  font-family: "DejaVu Serif", serif;
  font-weight: bold;
  font-size: 10.8px;
  color: #1e1e1e;
}
.dash { justify-content: flex-start; padding-left: 2px; font-weight: bold; font-size: 11px; }
.name { justify-content: center; font-size: 14px; color: #333; }
.grade { justify-content: center; font-size: 13.5px; }
.g-good { background: #c6efce; color: #1e7a2a; }
.g-mid { background: #ffeb9c; color: #9c5700; }
.g-low { background: #ffc7ce; color: #9c0006; justify-content: flex-start; padding-left: 1px; font-size: 16.5px; }

/* chart */
.chart {
  position: absolute;
  left: 224px;
  top: 119px;
  width: 341px;
  height: 212px;
  background: #fff;
  box-shadow: 0 0 0 1px #dcdcdc;
}
.chart svg { display: block; }
.chart text { font-family: "DejaVu Sans", sans-serif; }
.c-title { font-size: 12.5px; fill: #595959; text-anchor: middle; }
.c-axis { font-size: 8px; fill: #555; text-anchor: end; }
.c-val { font-size: 8px; fill: #404040; text-anchor: middle; }
.c-val.light { fill: #555; }
.c-cat { font-size: 6.5px; fill: #666; text-anchor: middle; }
.c-cat.end { text-anchor: end; }

/* sheet tabs */
.tabbar {
  height: 23px;
  flex: none;
  display: flex;
  align-items: flex-start;
  font-size: 11px;
  color: #555;
  position: relative;
  border-top: 1px solid #c8c8c8;
  box-sizing: border-box;
}
.hbtn {
  width: 12px;
  height: 13px;
  margin-top: 4px;
  margin-left: 18px;
  padding: 0;
  background: #fff;
  border: 1px solid #c8c8c8;
  box-sizing: border-box;
  display: flex;
  align-items: center;
  justify-content: center;
  flex: none;
}
.hbtn.r { margin-left: 2px; }
.hbtn .lf { border-right: 4px solid #666; border-left: 0; }
.hbtn .rt { border-left: 4px solid #666; border-right: 0; }
.htrack { width: 408px; height: 14px; margin-top: 4px; background: #dadada; flex: none; }
.hthumb { width: 14px; height: 14px; margin-top: 4px; background: #fff; border: 1px solid #c8c8c8; box-sizing: border-box; flex: none; }
.dots.tb { margin: 6px 0 0 12px; height: 10px; }
.plus { margin: 1px 29px 0 302px; flex: none; }
.stab {
  width: 55.5px;
  flex: none;
  box-sizing: border-box;
  text-align: center;
  line-height: 15px;
  margin-top: 2px;
  font-size: 11.5px;
  border-left: 1px solid #aaa;
  white-space: nowrap;
}
.stab-active {
  width: 120px;
  height: 21px;
  flex: none;
  background: #fff;
  color: #1e7145;
  font-family: "DejaVu Sans", sans-serif;
  font-size: 9px;
  font-weight: bold;
  text-align: center;
  line-height: 19px;
  box-sizing: border-box;
  border-bottom: 2px solid #217346;
  border-left: 1px solid #c8c8c8;
  border-right: 1px solid #c8c8c8;
  margin-top: -1px;
  white-space: nowrap;
}
.nav { flex: none; margin-top: 5px; }
.nav1 { margin-left: 34px; }
.nav2 { margin-left: 19px; }

/* status bar */
.status {
  height: 19px;
  flex: none;
  background: #f1f1f1;
  border-top: 1px solid #d8d8d8;
  box-sizing: border-box;
  display: flex;
  align-items: center;
  color: #555;
  font-size: 10.5px;
}
.ready { margin-left: 6px; width: 44px; }
.macro { flex: none; margin-right: 898px; }
.view {
  width: 32px;
  height: 18px;
  display: flex;
  align-items: center;
  justify-content: center;
  flex: none;
}
.v-on { background: #d2d2d2; }
.zm { font-size: 13px; color: #555; width: 8px; text-align: center; }
.minus { margin-left: 4px; }
.slider {
  width: 85px;
  height: 1px;
  margin: 0 2px;
  background: #999;
  position: relative;
  flex: none;
}
.knob { position: absolute; left: 37px; top: -5px; width: 3px; height: 10px; background: #666; }
.tick { position: absolute; left: 43px; top: -2px; width: 1px; height: 5px; background: #999; }
.pctz { margin-left: 10px; }

/* taskbar */
.taskbar {
  height: 34px;
  flex: none;
  background: #02020a;
  display: flex;
  align-items: stretch;
}
.start { width: 41px; display: flex; align-items: center; justify-content: center; flex: none; }
.search {
  width: 295px;
  flex: none;
  background: #f2f2f2;
  display: flex;
  align-items: center;
  box-sizing: border-box;
  padding-left: 8px;
  font-size: 12.5px;
  color: #444;
}
.cortana { width: 18px; height: 18px; border: 3px solid #111; border-radius: 50%; box-sizing: border-box; flex: none; }
.stext { margin-left: 9px; width: 236px; }
.ti {
  width: 36px;
  margin: 0 3px;
  flex: none;
  display: flex;
  align-items: center;
  justify-content: center;
  box-sizing: border-box;
  border-bottom: 2px solid transparent;
  padding-top: 2px;
  font-size: 11px;
}
.ti.on { border-bottom-color: #76b9ed; }
.utorrent {
  width: 20px;
  height: 20px;
  background: #7cb82f;
  border-radius: 50%;
  color: #fff;
  font-size: 16px;
  font-weight: bold;
  text-align: center;
  line-height: 20px;
  font-family: "DejaVu Sans", sans-serif;
}
.excel { gap: 1px; }
.xl-x { color: #fff; background: #1d6f42; font-weight: bold; width: 9px; text-align: center; line-height: 15px; }
.tray {
  margin-left: auto;
  width: 256px;
  flex: none;
  display: grid;
  grid-template-columns: 32px 30px 16px 20px 20px 30px 66px 28px 14px;
  align-items: center;
  justify-items: center;
  color: #eee;
}
.ime { font-size: 12px; font-family: "DejaVu Sans", sans-serif; }
.clock { display: flex; flex-direction: column; align-items: center; font-size: 11px; line-height: 15px; white-space: nowrap; }
.notif { position: relative; }
.notif span {
  position: absolute;
  left: 6px;
  top: 6px;
  width: 12px;
  height: 12px;
  border-radius: 50%;
  background: #333;
  border: 1px solid #888;
  box-sizing: border-box;
  font-size: 8.5px;
  line-height: 10px;
  text-align: center;
}
</style>
